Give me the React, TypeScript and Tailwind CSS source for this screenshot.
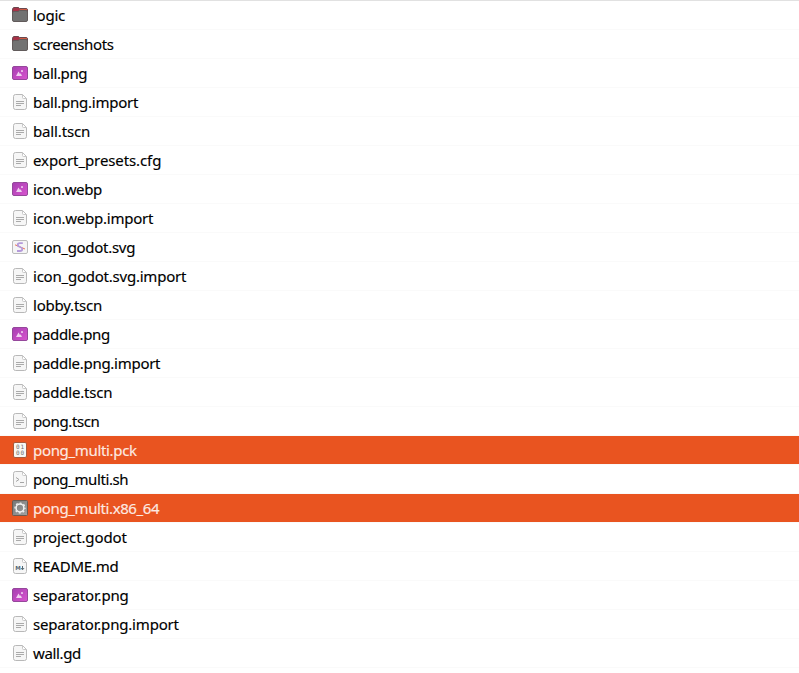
import type { ReactNode } from "react";

type Kind = "folder" | "image" | "text" | "svg" | "binary" | "script" | "exec" | "markdown";

interface Entry {
  name: string;
  kind: Kind;
  tracking: string;
  selected?: boolean;
}

const entries: Entry[] = [
  { name: "logic", kind: "folder", tracking: "tracking-[-0.25px]" },
  { name: "screenshots", kind: "folder", tracking: "tracking-[-0.37px]" },
  { name: "ball.png", kind: "image", tracking: "tracking-[-0.37px]" },
  { name: "ball.png.import", kind: "text", tracking: "tracking-[-0.26px]" },
  { name: "ball.tscn", kind: "text", tracking: "tracking-[-0.14px]" },
  { name: "export_presets.cfg", kind: "text", tracking: "tracking-[-0.1px]" },
  { name: "icon.webp", kind: "image", tracking: "tracking-[-0.36px]" },
  { name: "icon.webp.import", kind: "text", tracking: "tracking-[-0.24px]" },
  { name: "icon_godot.svg", kind: "svg", tracking: "tracking-[-0.29px]" },
  { name: "icon_godot.svg.import", kind: "text", tracking: "tracking-[-0.23px]" },
  { name: "lobby.tscn", kind: "text", tracking: "tracking-[-0.21px]" },
  { name: "paddle.png", kind: "image", tracking: "tracking-[-0.32px]" },
  { name: "paddle.png.import", kind: "text", tracking: "tracking-[-0.28px]" },
  { name: "paddle.tscn", kind: "text", tracking: "tracking-[-0.2px]" },
  { name: "pong.tscn", kind: "text", tracking: "tracking-[-0.38px]" },
  { name: "pong_multi.pck", kind: "binary", tracking: "tracking-[-0.33px]", selected: true },
  { name: "pong_multi.sh", kind: "script", tracking: "tracking-[-0.4px]" },
  { name: "pong_multi.x86_64", kind: "exec", tracking: "tracking-[-0.39px]", selected: true },
  { name: "project.godot", kind: "text", tracking: "tracking-[-0.1px]" },
  { name: "README.md", kind: "markdown", tracking: "tracking-[-0.2px]" },
  { name: "separator.png", kind: "image", tracking: "tracking-[-0.15px]" },
  { name: "separator.png.import", kind: "text", tracking: "tracking-[-0.18px]" },
  { name: "wall.gd", kind: "text", tracking: "tracking-[-0.35px]" },
];

// Sheet of paper with a folded corner, shared by all document icons.
function Page({ children }: { children?: ReactNode }) {
  return (
    <>
      <path d="M3.500.5H10.500L14.500 4.500V13.500Q14.500 15.500 12.500 15.500H3.500Q1.500 15.500 1.500 13.500V2.500Q1.500.5 3.500.5Z" fill="#f6f6f6" stroke="#b8b8b8" />
      <path d="M10.500 1V3.500Q10.500 4.500 11.500 4.500H14" fill="#fff" stroke="#c8c8c8" />
      {children}
    </>
  );
}

function FileIcon({ kind }: { kind: Kind }) {
  return (
    <svg className="block size-4 shrink-0" viewBox="0 0 16 16">
      {kind === "folder" && (
        <>
          <path d="M.5 3Q.5 .5 2 .5H6Q7 .5 7.500 1.500H14Q15.500 1.500 15.500 3V9H.5Z" fill="#a83248" stroke="#69484e" />
          <path d="M8 2H15V4H7Z" fill="#cf5a42" />
          <path d="M.5 6Q.5 4.500 2 4.500H6L7.500 3.500H14Q15.500 3.500 15.500 5V13Q15.500 14.500 14 14.500H2Q.5 14.500 .5 13Z" fill="#727272" stroke="#625b5b" />
        </>
      )}
      {kind === "image" && (
        <>
          <defs>
            <linearGradient id="photo" x1="0" y1="0" x2="1" y2="1">
              <stop offset="0" stopColor="#a53fb1" />
              <stop offset="1" stopColor="#d955cf" />
            </linearGradient>
          </defs>
          <rect x=".5" y="1.500" width="15" height="13" rx="1.500" fill="url(#photo)" stroke="#95489b" />
          <path d="M4 11L6.500 6.500L8 9L8.700 8.300L10 11Z" fill="#efd0f0" />
          <rect x="9" y="5" width="2" height="2" rx=".5" fill="#e9b8e9" />
        </>
      )}
      {kind === "text" && (
        <Page>
          <path d="M4 7.500H12M4 9.500H12M4 11.500H9" stroke="#aaa" />
        </Page>
      )}
      {kind === "svg" && (
        <>
          <rect x=".5" y="1.500" width="15" height="13" rx="1.500" fill="#f5f5f5" stroke="#bcbcbc" />
          <path d="M3 5.800L13 10" stroke="#ef7855" />
          <path d="M10.800 4.200H8Q5.700 4.200 5.700 6Q5.700 7.200 8 8Q10.300 8.800 10.300 10Q10.300 12 8 12H5" fill="none" stroke="#b49adb" strokeWidth="1.800" />
        </>
      )}
      {kind === "binary" && (
        <>
          <rect x="1.500" y=".5" width="13" height="15" rx="1.500" fill="#f7f7f3" stroke="#a65a3c" />
          <g className="font-['DejaVu_Sans_Mono',monospace] text-[6px]" fill="#6f6f6b">
            <text x="4" y="7">0</text>
            <text x="8.500" y="7">1</text>
            <text x="4" y="13">0</text>
            <text x="8.500" y="13">0</text>
          </g>
        </>
      )}
      {kind === "script" && (
        <Page>
          <path d="M4 6.500L7 8.500L4 10.500M8 11.500H12" fill="none" stroke="#a5a5a5" />
        </Page>
      )}
      {kind === "exec" && (
        <>
          <defs>
            <linearGradient id="plate" x1="0" y1="0" x2="1" y2="1">
              <stop offset="0" stopColor="#767676" />
              <stop offset="1" stopColor="#a3a3a3" />
            </linearGradient>
          </defs>
          <rect x=".5" y=".5" width="15" height="15" rx="1" fill="url(#plate)" stroke="#6b5b52" />
          <circle cx="8" cy="8" r="5" fill="none" stroke="#f3f3f3" strokeWidth="1.200" strokeDasharray="1.900 2.027" strokeDashoffset=".95" />
          <circle cx="8" cy="8" r="3.900" fill="none" stroke="#f3f3f3" strokeWidth="1.500" />
        </>
      )}
      {kind === "markdown" && (
        <Page>
          <text x="3.200" y="12" className="font-['DejaVu_Sans',sans-serif] text-[5.5px] font-bold" fill="#536873">
            M
          </text>
          <path d="M10.500 8V11.500M8.900 10L10.500 11.800L12.100 10" fill="none" stroke="#536873" />
        </Page>
      )}
    </svg>
  );
}

export default function App() {
  return (
    <main className="h-[673px] w-[799px] overflow-hidden border-t border-[#e1e1e1] bg-white font-['Noto_Sans',sans-serif] text-[15px] leading-7">
      <ul>
        {entries.map((entry) => (
          <li
            key={entry.name}
            className={`flex h-[29px] items-center gap-[5px] border-b border-[#fafafa] bg-clip-padding pl-3 [-webkit-text-stroke:0.15px] ${
              entry.selected ? "bg-[#e95420] text-[#fdeae2]" : "text-black"
            }`}
          >
            <FileIcon kind={entry.kind} />
            <span className={entry.tracking}>{entry.name}</span>
          </li>
        ))}
      </ul>
    </main>
  );
}
